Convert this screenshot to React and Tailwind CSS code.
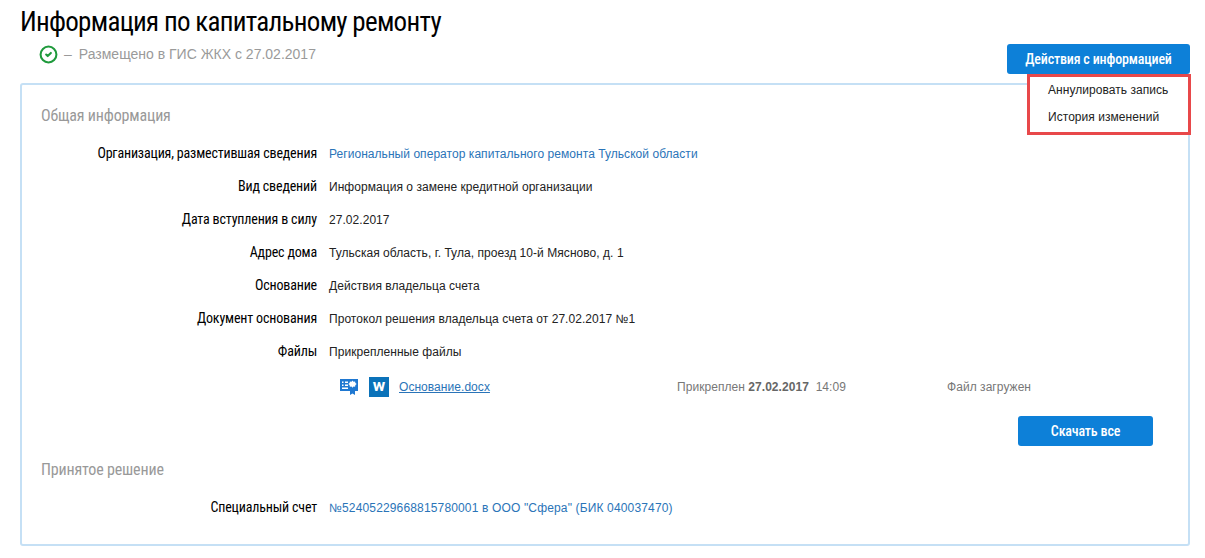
import { CircleCheck } from "lucide-react";

const condensed = "font-['Roboto',sans-serif] [font-stretch:75%]";

const rows = [
  { label: "Организация, разместившая сведения", value: "Региональный оператор капитального ремонта Тульской области", link: true },
  { label: "Вид сведений", value: "Информация о замене кредитной организации" },
  { label: "Дата вступления в силу", value: "27.02.2017" },
  { label: "Адрес дома", value: "Тульская область, г. Тула, проезд 10-й Мясново, д. 1" },
  { label: "Основание", value: "Действия владельца счета" },
  { label: "Документ основания", value: "Протокол решения владельца счета от 27.02.2017 №1" },
  { label: "Файлы", value: "Прикрепленные файлы" },
];

function Row({ label, value, link, wide }) {
  return (
    <div className="flex h-[33px] items-center">
      <div className={`w-[276px] shrink-0 text-right text-[14px] tracking-[-0.17px] text-black ${condensed}`}>{label}</div>
      <div className={`ml-[12px] font-['Liberation_Sans',sans-serif] text-[12px] ${wide ? "tracking-[0.15px]" : "tracking-[0.05px]"} ${link ? "text-[#2a74b8]" : "text-[#222]"}`}>{value}</div>
    </div>
  );
}

function CertIcon() {
  return (
    <svg width="18" height="16" viewBox="0 0 18 16" fill="#1f78d1">
      <rect x="0" y="0" width="18" height="12" />
      <rect x="2" y="2.5" width="1.5" height="1.5" fill="#fff" />
      <rect x="5" y="2.5" width="3" height="1.5" fill="#fff" />
      <rect x="2" y="5.5" width="1.5" height="1.5" fill="#fff" />
      <rect x="5" y="5.5" width="3" height="1.5" fill="#fff" />
      <rect x="2" y="8.5" width="6" height="1.5" fill="#fff" />
      <path d="M12.5 1.5l1 1.3 1.6-.3.3 1.6 1.3 1-1.3 1-.3 1.6-1.6-.3-1 1.3-1-1.3-1.6.3-.3-1.6-1.3-1 1.3-1 .3-1.6 1.6.3z" fill="#fff" />
      <path d="M10 11h5v5l-2.5-1.6L10 16z" />
    </svg>
  );
}

export default function App() {
  return (
    <div className="relative h-[558px] w-[1205px] overflow-hidden bg-white font-['Liberation_Sans',sans-serif]">
      <div className="flex h-[83px] pl-[20px] pr-[15px]">
        <div className="flex-1">
          <h1 className={`mt-[5px] text-[27px] leading-[34px] tracking-[-0.72px] text-black ${condensed}`}>
            Информация по капитальному ремонту
          </h1>
          <div className="mt-[5px] ml-[19px] flex items-center text-[14px] text-[#9a9a9a]">
            <CircleCheck size={19} strokeWidth={2.6} className="text-[#1f9a3c]" />
            <span className="ml-[6px]">–</span>
            <span className="ml-[7px]">Размещено в ГИС ЖКХ с 27.02.2017</span>
          </div>
        </div>
        <button className={`mt-[44px] h-[30px] w-[183px] rounded-[3px] bg-[#0d80d8] text-center text-[14px] font-medium tracking-[-0.17px] text-white ${condensed}`}>
          Действия с информацией
        </button>
      </div>

      <div className="ml-[20px] mr-[15px] h-[463px] rounded-[3px] border-2 border-[#c5e0f5] pl-[19px] pr-[35px]">
        <div className={`mt-[21px] text-[16px] leading-[20px] tracking-[-0.17px] text-[#999] ${condensed}`}>Общая информация</div>
        <div className="mt-[11px]">
          {rows.map((r) => (
            <Row key={r.label} {...r} />
          ))}
        </div>
        <div className="mt-[7px] flex h-[24px] items-center pl-[299px] text-[12px] tracking-[0.05px]">
          <CertIcon />
          <div className="ml-[11px] flex h-[20px] w-[20px] items-center justify-center bg-[#0b72b9] pb-[2px] font-['Roboto',sans-serif] text-[17px] font-bold text-white">w</div>
          <a className="ml-[10px] w-[278px] text-[#2a74b8] underline">Основание.docx</a>
          <span className="w-[270px] text-[#777]">
            Прикреплен <b className="font-bold text-[#666]">27.02.2017</b>&nbsp; 14:09
          </span>
          <span className="text-[#777]">Файл загружен</span>
        </div>
        <div className="mt-[17px] flex justify-end">
          <button className={`h-[30px] w-[135px] rounded-[3px] bg-[#0d80d8] text-[14px] font-medium tracking-[-0.17px] text-white ${condensed}`}>
            Скачать все
          </button>
        </div>
        <div className={`mt-[14px] text-[16px] leading-[20px] tracking-[-0.17px] text-[#999] ${condensed}`}>Принятое решение</div>
        <div className="mt-[11px]">
          <Row label="Специальный счет" value={'№52405229668815780001 в ООО "Сфера" (БИК 040037470)'} link wide />
        </div>
      </div>

      {/* dropdown lies over the card */}
      <div className="absolute left-[1027px] top-[74px] flex h-[61px] w-[164px] flex-col border-[3px] border-[#e8484a] bg-white pl-[18px] text-[12px] tracking-[0.05px] text-[#222]">
        <div className="flex h-[25px] items-center">Аннулировать запись</div>
        <div className="flex h-[29px] items-center">История изменений</div>
      </div>
    </div>
  );
}
